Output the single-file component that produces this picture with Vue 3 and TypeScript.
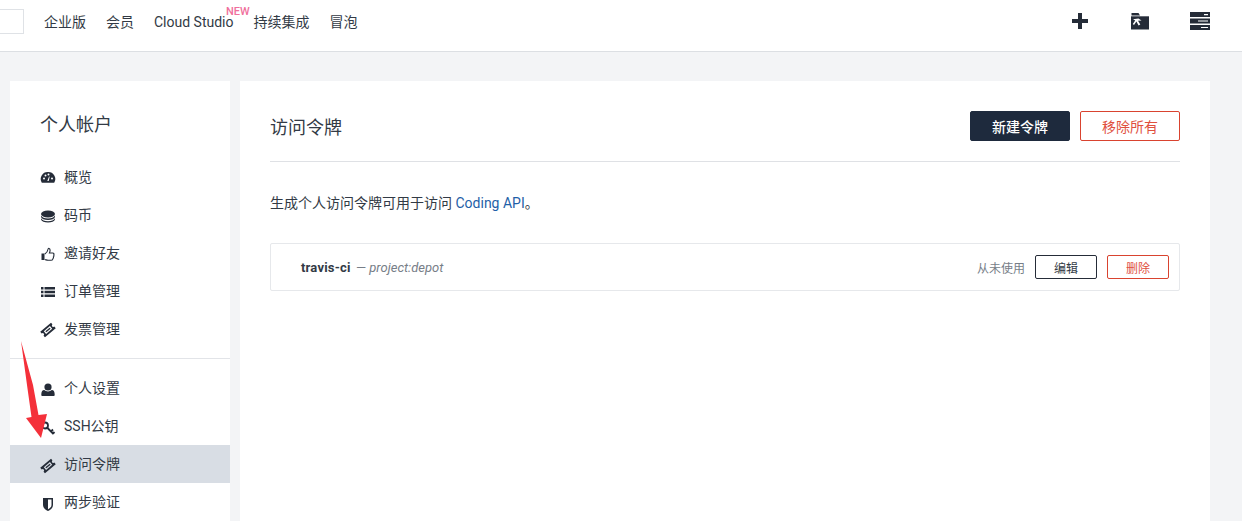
<script setup lang="ts">
const groupA = [
  { label: '概览', icon: 'gauge' },
  { label: '码币', icon: 'coins' },
  { label: '邀请好友', icon: 'thumb' },
  { label: '订单管理', icon: 'list' },
  { label: '发票管理', icon: 'ticket' },
]
const groupB = [
  { label: '个人设置', icon: 'user' },
  { label: 'SSH公钥', icon: 'key' },
  { label: '访问令牌', icon: 'ticket', active: true },
  { label: '两步验证', icon: 'shield' },
]
const nav = ['企业版', '会员', 'Cloud Studio', '持续集成', '冒泡']
</script>

<template>
  <div class="page">
    <header class="top">
      <div class="search"></div>
      <nav class="nav">
        <a v-for="n in nav" :key="n" class="nav-item">{{ n }}<span v-if="n === 'Cloud Studio'" class="new">NEW</span></a>
      </nav>
      <div class="actions">
        <svg class="plus" width="18" height="18" viewBox="0 0 18 18"><path d="M7 1h4v6h6v4h-6v6H7v-6H1V7h6z" fill="#252c38"/></svg>
        <svg width="20" height="18" viewBox="0 0 20 18"><path d="M1.500 1h7L10 3.500H1.500z" fill="#252c38"/><path d="M1 4.300h18V17.500H1z" fill="#252c38"/><path d="M3 7.300l5.500-.8 3 2-3.500.3 2.300 3.800-1.700 1-2.200-4-2.400 3.400-1.200-1 2.400-3.400z" fill="#fff"/></svg>
        <svg width="20" height="18" viewBox="0 0 20 18"><path d="M0 0h20v5H0zM0 6.500h20v5H0zM0 13h20v5H0z" fill="#252c38"/><path d="M14 2h4v1.200h-4zM8 8.400h10v1.200H8zM11 14.900h7v1.200h-7z" fill="#fff"/></svg>
      </div>
    </header>

    <div class="body">
      <aside class="side">
        <h2 class="side-title">个人帐户</h2>
        <ul class="menu first">
          <li v-for="m in groupA" :key="m.label" class="item">
            <svg class="ico" viewBox="0 0 16 16">
              <template v-if="m.icon === 'gauge'">
                <path d="M8 2a7 7 0 0 1 6.200 10.700H1.800A7 7 0 0 1 8 2z" fill="#252c38"/>
                <g fill="#fff"><circle cx="4" cy="8.500" r="1"/><circle cx="5.500" cy="5.500" r="1"/><circle cx="8.500" cy="4.500" r="1"/><circle cx="12" cy="8.500" r="1"/><path d="M7.300 11l1.800-4.500.6.200L8.700 11z"/></g>
              </template>
              <template v-else-if="m.icon === 'coins'">
                <ellipse cx="8" cy="6" rx="7" ry="3.500" fill="#252c38"/>
                <path d="M1 7.500c1 2 3.500 3 7 3s6-1 7-3v1.500c-.5 2-3.500 3-7 3s-6.500-1-7-3zM1 10.200c1 2 3.500 3 7 3s6-1 7-3v1.300c-.5 2-3.500 3-7 3s-6.500-1-7-3z" fill="#252c38"/>
              </template>
              <template v-else-if="m.icon === 'thumb'">
                <path d="M1.500 7.500h3v6.500h-3z" fill="#252c38"/>
                <path d="M4.800 8c1.500-1 3-3 3.300-5 .1-1 2-.8 2 1.200 0 1-.4 2-.7 2.800h3.300c1.300 0 1.600 1.200 1 2 .4.700.2 1.500-.3 2 .2.700 0 1.300-.5 1.700 0 1-.7 1.600-1.700 1.600H8c-1.300 0-2-.6-3.200-.8" fill="none" stroke="#252c38" stroke-width="1.100"/>
              </template>
              <template v-else-if="m.icon === 'list'">
                <path d="M1 3h2.500v2.400H1zM4.500 3H15v2.400H4.500zM1 6.800h2.500v2.400H1zM4.500 6.800H15v2.400H4.500zM1 10.600h2.500V13H1zM4.500 10.600H15V13H4.500z" fill="#252c38"/>
              </template>
              <template v-else-if="m.icon === 'ticket'">
                <g transform="rotate(-40 8 8) translate(8 8) scale(.88) translate(-8 -8)">
                  <path d="M0 3.800h16v2.500a1.700 1.700 0 0 0 0 3.400v2.500H0V9.700a1.700 1.700 0 0 0 0-3.400z" fill="#252c38"/>
                  <path d="M3.500 6h9v4h-9z" fill="#fff"/><path d="M4.800 7.200h6.400v1.600H4.800z" fill="#252c38"/>
                </g>
              </template>
            </svg>
            <span>{{ m.label }}</span>
          </li>
        </ul>
        <ul class="menu second">
          <li v-for="m in groupB" :key="m.label" class="item" :class="{ active: m.active }">
            <svg class="ico" viewBox="0 0 16 16">
              <template v-if="m.icon === 'user'">
                <circle cx="8" cy="5" r="3.600" fill="#252c38"/>
                <path d="M2.500 14c-.8 0-1.200-.5-1.200-1.300 0-2.700.9-4.600 2.900-4.600 1 .8 2.400 1.300 3.800 1.300s2.800-.5 3.800-1.300c2 0 2.900 1.900 2.900 4.600 0 .8-.4 1.300-1.200 1.300z" fill="#252c38"/>
              </template>
              <template v-else-if="m.icon === 'key'">
                <circle cx="5" cy="5.500" r="3" fill="none" stroke="#252c38" stroke-width="1.800"/>
                <path d="M7 7.500l6.500 6.500M11 11.500l2-2M13 13.500l1.500-1.500" stroke="#252c38" stroke-width="1.800" fill="none"/>
              </template>
              <template v-else-if="m.icon === 'ticket'">
                <g transform="rotate(-40 8 8) translate(8 8) scale(.88) translate(-8 -8)">
                  <path d="M0 3.800h16v2.500a1.700 1.700 0 0 0 0 3.400v2.500H0V9.700a1.700 1.700 0 0 0 0-3.400z" fill="#252c38"/>
                  <path d="M3.500 6h9v4h-9z" fill="#d8dde4"/><path d="M4.800 7.200h6.400v1.600H4.800z" fill="#252c38"/>
                </g>
              </template>
              <template v-else-if="m.icon === 'shield'">
                <path d="M3 2h10v7c0 3-2.500 4.800-5 6-2.500-1.200-5-3-5-6z" fill="#252c38"/>
                <path d="M8 3.500h3.500V9c0 2-1.800 3.400-3.500 4.300z" fill="#fff"/>
              </template>
            </svg>
            <span class="lbl">{{ m.label }}</span>
          </li>
        </ul>
      </aside>

      <main class="card">
        <div class="head">
          <h1 class="title">访问令牌</h1>
          <div class="head-btns">
            <button class="btn dark">新建令牌</button>
            <button class="btn danger">移除所有</button>
          </div>
        </div>
        <p class="desc">生成个人访问令牌可用于访问 <a class="link">Coding API</a>。</p>
        <div class="token">
          <div class="token-info"><b>travis-ci</b><span class="scope"> — <i>project:depot</i></span></div>
          <span class="never">从未使用</span>
          <button class="sbtn edit">编辑</button>
          <button class="sbtn del">删除</button>
        </div>
      </main>
    </div>

    <svg class="arrow" width="60" height="110" viewBox="0 0 60 110">
      <path d="M21 1 L33 45 L38.500 75 L47 74 L41 98 L26 78 L31.500 77 L27 45 Z" fill="#f4303a"/>
    </svg>
  </div>
</template>

<style>
html, body { margin: 0; overflow: hidden; background: #f3f4f6; }
</style>

<style scoped>
.page {
  position: relative;
  width: 1242px;
  height: 521px;
  overflow: hidden;
  background: #f3f4f6;
  font-family: Roboto, "Noto Sans CJK SC", sans-serif;
  font-size: 14px;
  color: #323a45;
}
.top {
  display: flex;
  align-items: center;
  height: 43px;
  padding-bottom: 8px;
  background: #fff;
  border-bottom: 1px solid #dcdfe3;
}
.search {
  width: 23px;
  height: 23px;
  border: 1px solid #dfe2e6;
  border-left: 0;
}
.nav { display: flex; gap: 20px; margin-left: 20px; }
.nav-item { position: relative; line-height: 20px; white-space: nowrap; }
.new {
  position: absolute;
  left: 72px;
  top: -6px;
  font-size: 11px;
  line-height: 12px;
  font-weight: 500;
  color: #f0709c;
}
.actions {
  display: flex;
  align-items: center;
  margin-left: auto;
  margin-right: 32px;
  padding-bottom: 2px;
  gap: 40px;
}
.plus { margin-right: 1px; }
.body {
  display: flex;
  gap: 10px;
  padding: 29px 32px 0 10px;
}
.side {
  width: 220px;
  flex: none;
  background: #fff;
  height: 440px;
}
.side-title {
  margin: 0;
  padding: 31px 0 0 30px;
  font-size: 18px;
  font-weight: 400;
  line-height: 26px;
  color: #323a45;
}
.menu { list-style: none; margin: 0; padding: 0; }
.first { padding: 19px 0 11px; border-bottom: 1px solid #e2e4e8; }
.second { padding-top: 10px; }
.item {
  display: flex;
  align-items: center;
  height: 38px;
  padding-left: 30px;
  gap: 8px;
  color: #323a45;
}
.item.active { background: #d8dde4; }
.lbl { margin-bottom: 2px; }
.ico { width: 16px; height: 16px; flex: none; margin-top: 3px; }
.card {
  flex: 1;
  background: #fff;
  padding: 0 30px;
  height: 440px;
}
.head {
  display: flex;
  align-items: center;
  justify-content: space-between;
  height: 70px;
  padding-top: 10px;
  border-bottom: 1px solid #dfe1e5;
}
.title { margin: 0; font-size: 18px; font-weight: 400; color: #323a45; }
.head-btns { display: flex; gap: 10px; }
.btn {
  width: 100px;
  height: 30px;
  font: inherit;
  font-size: 14px;
  border-radius: 2px;
  padding: 0;
}
.dark { background: #1e2a3d; border: 1px solid #1e2a3d; color: #fff; font-weight: 500; }
.danger { background: #fff; border: 1px solid #d9432f; color: #e0503e; }
.desc { margin: 0; padding-top: 30px; line-height: 22px; color: #323a45; font-size: 14px; }
.link { color: #1f5fa8; }
.token {
  display: flex;
  align-items: center;
  height: 46px;
  margin-top: 29px;
  padding: 0 10px 0 30px;
  border: 1px solid #e6e8eb;
  border-radius: 2px;
}
.token-info { flex: 1; font-size: 13px; padding-top: 1px; }
.token-info b { font-weight: 700; color: #323a45; letter-spacing: .2px; }
.scope { color: #777e88; margin-left: 2px; }
.never { font-size: 12px; color: #777e88; margin-right: 10px; }
.sbtn {
  width: 62px;
  height: 24px;
  padding: 0;
  font: inherit;
  font-size: 12px;
  background: #fff;
  border-radius: 2px;
}
.edit { border: 1px solid #252c38; color: #323a45; margin-right: 10px; }
.del { border: 1px solid #d9432f; color: #e0503e; }
.arrow { position: absolute; left: 0; top: 340px; }
</style>
